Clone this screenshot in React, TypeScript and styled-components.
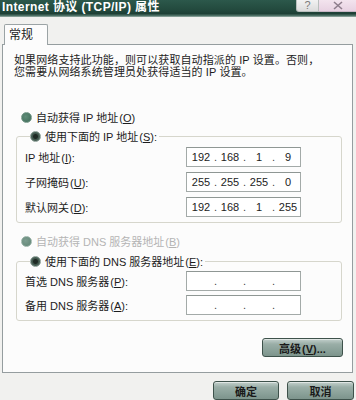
import React from 'react'
import styled, { createGlobalStyle } from 'styled-components'

const GlobalStyle = createGlobalStyle`
  html, body {
    margin: 0;
    padding: 0;
    background: #f1f1ef;
  }
  body {
    font-family: "Liberation Sans", "Noto Sans CJK SC", sans-serif;
    font-size: 11px;
    color: #1c1c1c;
  }
`

type Field = [string, string, string, string]

// access key shown as "(X)" with the letter underlined
const Key = ({ k }: { k: string }) => (
  <AccessKey>
    (<u>{k}</u>)
  </AccessKey>
)

const ipRows: { label: React.ReactNode; value: Field }[] = [
  { label: <>IP 地址<Key k="I" />:</>, value: ['192', '168', '1', '9'] },
  { label: <>子网掩码<Key k="U" />:</>, value: ['255', '255', '255', '0'] },
  { label: <>默认网关<Key k="D" />:</>, value: ['192', '168', '1', '255'] },
]

const dnsRows: { label: React.ReactNode; value: Field }[] = [
  { label: <>首选 DNS 服务器<Key k="P" />:</>, value: ['', '', '', ''] },
  { label: <>备用 DNS 服务器<Key k="A" />:</>, value: ['', '', '', ''] },
]

const IpInput = ({ value }: { value: Field }) => (
  <InputBox>
    {value.map((v, i) => (
      <React.Fragment key={i}>
        <Octet>{v}</Octet>
        {i < 3 && <Dot>.</Dot>}
      </React.Fragment>
    ))}
  </InputBox>
)

const App = () => {
  return (
    <Window>
      <GlobalStyle />
      <TitleBar>
        <Title>Internet 协议 (TCP/IP) 属性</Title>
        <TitleButtons>
          <HelpButton>?</HelpButton>
          <CloseButton>
            <svg width="12" height="9" viewBox="0 0 12 9">
              <path d="M2 1 L10 8 M10 1 L2 8" stroke="#8e7d8c" strokeWidth="1.6" fill="none" />
            </svg>
          </CloseButton>
        </TitleButtons>
      </TitleBar>

      <Content>
        <TabStrip>
          <Tab>常规</Tab>
        </TabStrip>
        <Panel>
          <Intro>
            <IntroLine>如果网络支持此功能，则可以获取自动指派的 IP 设置。否则，</IntroLine>
            <IntroLine>您需要从网络系统管理员处获得适当的 IP 设置。</IntroLine>
          </Intro>

          <RadioRow>
            <Radio />
            <span>自动获得 IP 地址<Key k="O" /></span>
          </RadioRow>

          <Group>
            <Legend>
              <Radio checked />
              <span>使用下面的 IP 地址<Key k="S" />:</span>
            </Legend>
            {ipRows.map((r, i) => (
              <FieldRow key={i}>
                <Label>{r.label}</Label>
                <IpInput value={r.value} />
              </FieldRow>
            ))}
          </Group>

          <RadioRow $disabled $top={11}>
            <Radio disabled />
            <span>自动获得 DNS 服务器地址<Key k="B" /></span>
          </RadioRow>

          <Group $top={6} $dense>
            <Legend>
              <Radio checked />
              <span>使用下面的 DNS 服务器地址<Key k="E" />:</span>
            </Legend>
            {dnsRows.map((r, i) => (
              <FieldRow key={i}>
                <Label>{r.label}</Label>
                <IpInput value={r.value} />
              </FieldRow>
            ))}
          </Group>

          <PanelActions>
            <Button $width={81}>
              <span>高级<Key k="V" />...</span>
            </Button>
          </PanelActions>
        </Panel>
      </Content>

      <Footer>
        <Button $width={66}>确定</Button>
        <Button $width={67}>取消</Button>
      </Footer>
    </Window>
  )
}

export default App

const Window = styled.div`
  width: 356px;
  height: 400px;
  overflow: hidden;
  display: flex;
  flex-direction: column;
  background: #f1f1ef;
`
const TitleBar = styled.div`
  height: 17px;
  flex: none;
  display: flex;
  justify-content: space-between;
  align-items: flex-start;
  background: linear-gradient(#2c584b 0%, #234a3e 55%, #1d4035 80%, #4f7267 92%, #9fb3ac 100%);
`
const Title = styled.div`
  padding: 0 0 0 2px;
  color: #ffffff;
  font-family: "Liberation Sans", "Noto Sans CJK SC", sans-serif;
  font-weight: bold;
  font-size: 12px;
  line-height: 14px;
  letter-spacing: 0.4px;
`
const TitleButtons = styled.div`
  display: flex;
  height: 12px;
`
const HelpButton = styled.div`
  width: 23px;
  height: 12px;
  box-sizing: border-box;
  border: 1px solid #b9bfbd;
  border-top: none;
  border-radius: 0 0 0 3px;
  background: linear-gradient(#f2f2f2, #dcdcdc);
  color: #7b7b7b;
  font-size: 11px;
  line-height: 10px;
  text-align: center;
`
const CloseButton = styled.div`
  width: 37px;
  height: 12px;
  box-sizing: border-box;
  border-bottom: 1px solid #c7b6c4;
  background: linear-gradient(#f3e4ee, #e8d2e2);
  display: flex;
  align-items: center;
  justify-content: center;
`
const Content = styled.div`
  flex: none;
  padding: 7px 3px 0 2px;
`
const TabStrip = styled.div`
  display: flex;
  height: 20px;
  padding-left: 2px;
`
const Tab = styled.div`
  width: 44px;
  box-sizing: border-box;
  height: 21px;
  border: 1px solid #9ba3a5;
  border-bottom: none;
  border-radius: 2px 2px 0 0;
  background: #fcfcfc;
  position: relative;
  z-index: 1;
  padding: 3px 0 0 4px;
  font-size: 12px;
  line-height: 14px;
`
const Panel = styled.div`
  height: 329px;
  box-sizing: border-box;
  border: 1px solid #959d9f;
  background: #fcfcfc;
  display: flex;
  flex-direction: column;
`
const Intro = styled.div`
  margin: 9px 0 0 11px;
  display: flex;
  flex-direction: column;
`
const IntroLine = styled.div`
  height: 12px;
  line-height: 13px;
  font-size: 11px;
  letter-spacing: 0.1px;
  white-space: nowrap;
`
const AccessKey = styled.span`
  font-family: "Liberation Sans", sans-serif;
  margin-left: 1px;
`
const RadioRow = styled.div<{ $disabled?: boolean; $top?: number }>`
  display: flex;
  align-items: center;
  height: 14px;
  margin: ${(p) => p.$top ?? 32}px 0 0 18px;
  color: ${(p) => (p.$disabled ? '#b4b4b4' : '#1c1c1c')};
  font-size: 11px;
  gap: 4px;
`
const Radio = styled.span<{ checked?: boolean; disabled?: boolean }>`
  width: 11px;
  height: 11px;
  flex: none;
  border-radius: 50%;
  box-sizing: border-box;
  background: ${(p) =>
    p.checked
      ? 'radial-gradient(circle, #1f2a25 0 2px, #3f554b 3px, #5e7a6e 100%)'
      : p.disabled
        ? 'radial-gradient(circle at 40% 40%, #7d9d90, #5f8474)'
        : 'radial-gradient(circle at 40% 40%, #5f8c78, #3e6a57)'};
  border: 1px solid ${(p) => (p.checked ? '#8a9c95' : p.disabled ? '#9ab3a9' : '#789a8b')};
`
const Group = styled.fieldset<{ $top?: number; $dense?: boolean }>`
  margin: ${(p) => p.$top ?? 5}px 10px 0 13px;
  padding: ${(p) => (p.$dense ? '3px 0 5px 8px' : '4px 0 5px 8px')};
  border: 1px solid #d6d6cc;
  border-radius: 3px;
  display: flex;
  flex-direction: column;
  gap: ${(p) => (p.$dense ? '4px' : '5px')};
`
const Legend = styled.legend`
  display: flex;
  align-items: center;
  gap: 4px;
  height: 14px;
  margin-left: 5px;
  padding: 0 2px 0 0;
  font-size: 11px;
`
const FieldRow = styled.div`
  display: flex;
  align-items: center;
  height: 20px;
`
const Label = styled.div`
  width: 161px;
  flex: none;
  font-size: 11px;
`
const InputBox = styled.div`
  width: 115px;
  height: 20px;
  box-sizing: border-box;
  border: 1px solid #a3aaa8;
  border-top-color: #8f9794;
  background: #ffffff;
  display: flex;
  align-items: center;
  padding-left: 2px;
  font-size: 11px;
  color: #222;
`
const Octet = styled.span`
  width: 24px;
  text-align: center;
`
const Dot = styled.span`
  width: 5px;
  text-align: center;
  color: #444;
`
const PanelActions = styled.div`
  display: flex;
  justify-content: flex-end;
  margin: 17px 9px 0 0;
`
const Button = styled.div<{ $width: number }>`
  width: ${(p) => p.$width}px;
  height: 19px;
  box-sizing: border-box;
  border: 1px solid #3e524b;
  border-radius: 3px;
  background: linear-gradient(#c3d0cc 0%, #9aaea7 30%, #89a098 70%, #7d948c 100%);
  box-shadow: inset 0 1px 0 rgba(255, 255, 255, 0.5);
  display: flex;
  align-items: center;
  justify-content: center;
  font-size: 11px;
  color: #1a1a1a;
  font-weight: bold;
`
const Footer = styled.div`
  flex: 1;
  display: flex;
  justify-content: flex-end;
  align-items: flex-start;
  gap: 8px;
  padding: 8px 2px 0 0;
`
